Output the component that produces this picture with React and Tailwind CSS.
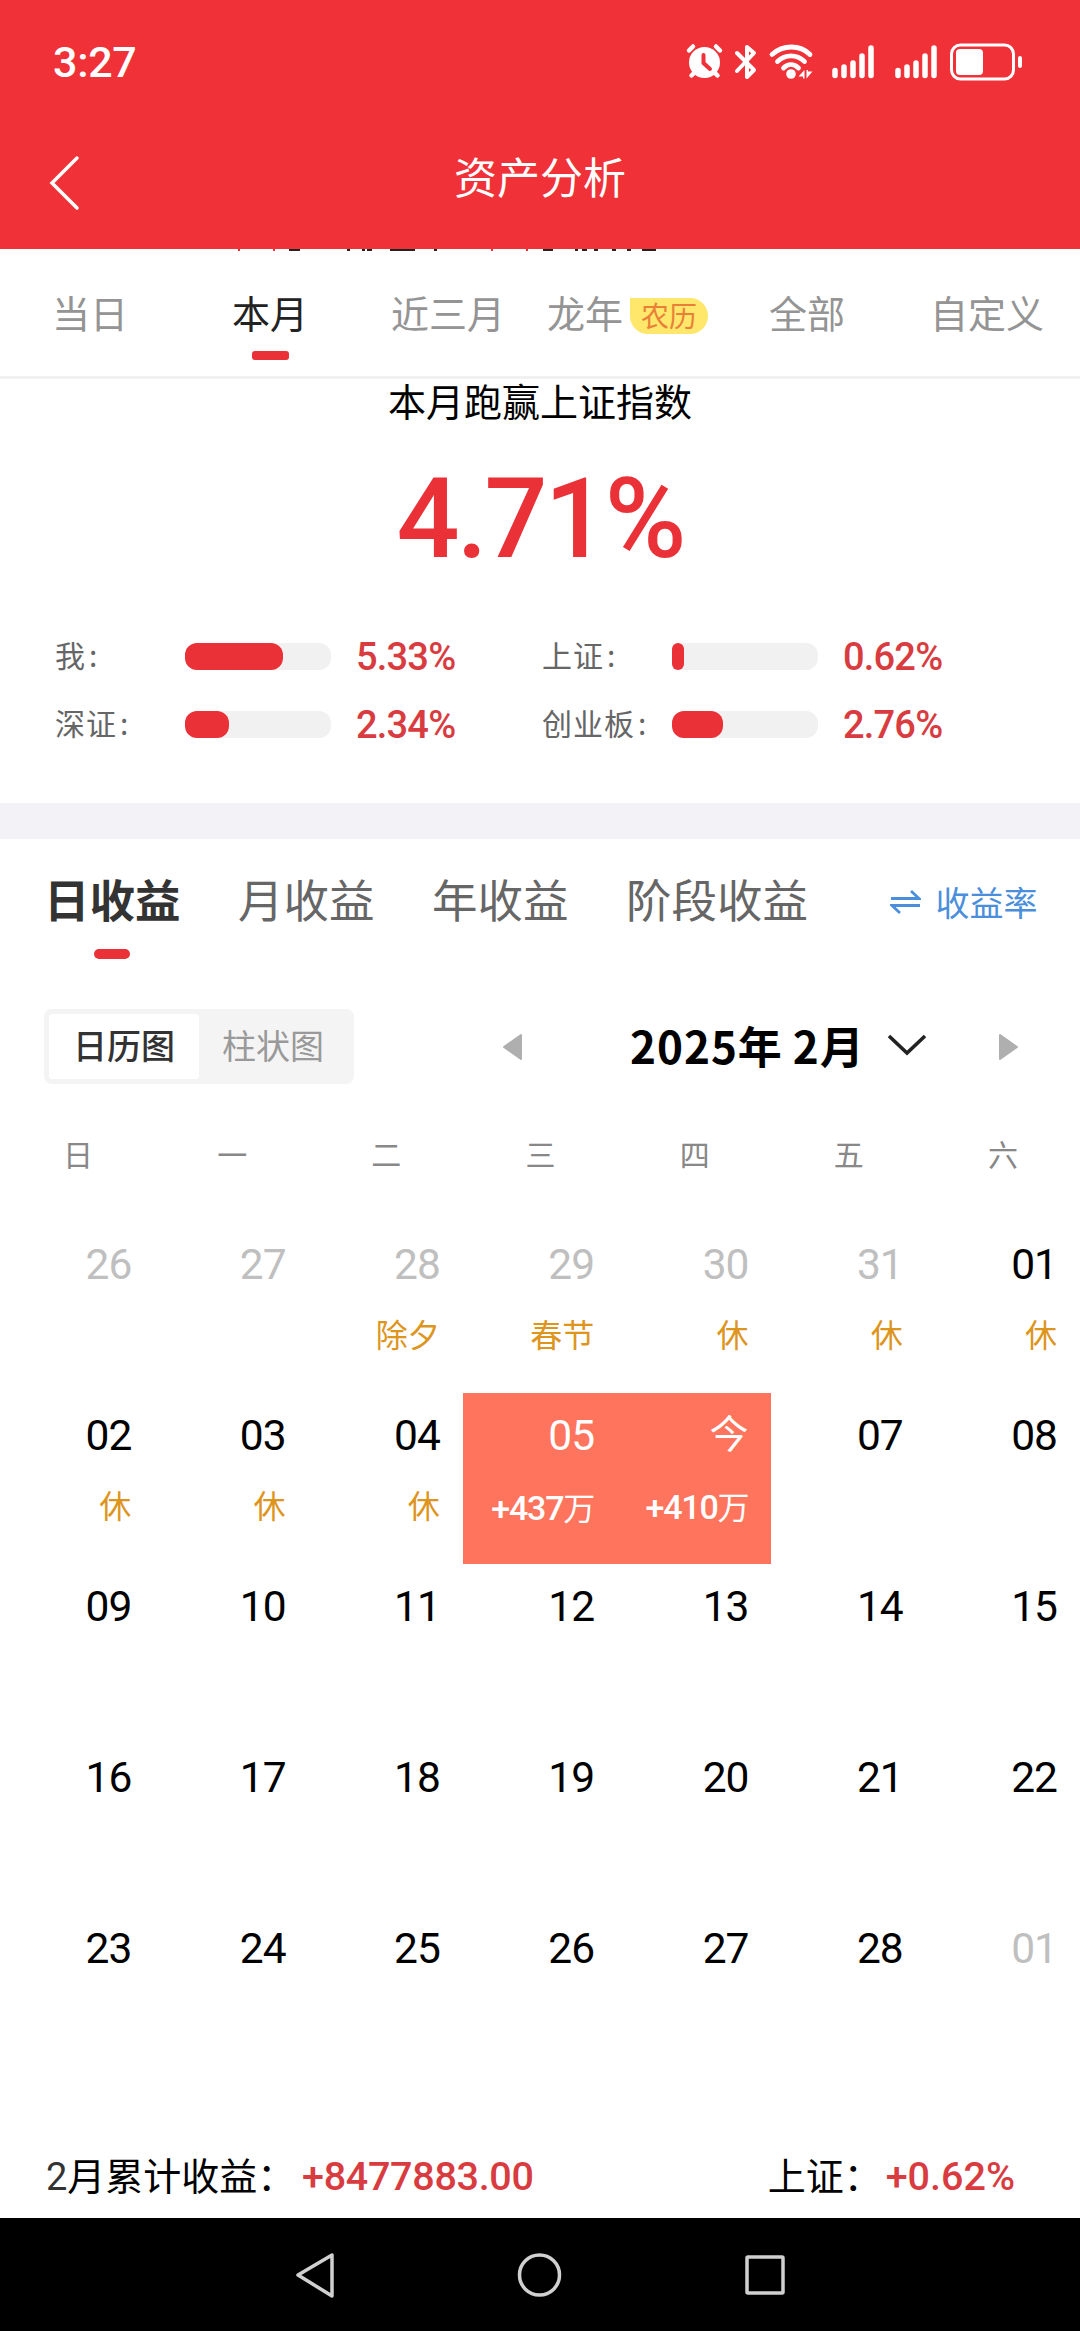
import React, { useState } from 'react';

const periods = [
  { id: 'day', label: '当日', width: 'w-[180px]' },
  { id: 'month', label: '本月', width: 'w-[159px]' },
  { id: 'quarter', label: '近三月', width: 'w-[156px]' },
  { id: 'lunar', label: '龙年', badge: '农历', width: 'w-[222px]' },
  { id: 'all', label: '全部', width: 'w-[161px]' },
  { id: 'custom', label: '自定义', width: 'w-[150px]' },
];

const indexes = [
  { label: '我', value: '5.33%', bar: 98 },
  { label: '上证', value: '0.62%', bar: 12 },
  { label: '深证', value: '2.34%', bar: 44 },
  { label: '创业板', value: '2.76%', bar: 51 },
];

const profitTabs = ['日收益', '月收益', '年收益', '阶段收益'];
const weekdays = ['日', '一', '二', '三', '四', '五', '六'];

// out = belongs to a neighbouring month
const days = [
  { d: '26', out: true }, { d: '27', out: true }, { d: '28', out: true, note: '除夕' }, { d: '29', out: true, note: '春节' },
  { d: '30', out: true, note: '休' }, { d: '31', out: true, note: '休' }, { d: '01', note: '休' },
  { d: '02', note: '休' }, { d: '03', note: '休' }, { d: '04', note: '休' }, { d: '05', profit: '+437' },
  { d: '今', profit: '+410' }, { d: '07' }, { d: '08' },
  { d: '09' }, { d: '10' }, { d: '11' }, { d: '12' }, { d: '13' }, { d: '14' }, { d: '15' },
  { d: '16' }, { d: '17' }, { d: '18' }, { d: '19' }, { d: '20' }, { d: '21' }, { d: '22' },
  { d: '23' }, { d: '24' }, { d: '25' }, { d: '26' }, { d: '27' }, { d: '28' }, { d: '01', out: true },
];

function StatusIcons() {
  return (
    <svg width="340" height="44" viewBox="685 40 340 44" fill="none">
      {/* Alarm */}
      <g stroke="#fff" strokeWidth="4.500" strokeLinecap="round">
        <path d="M689 50.500l4-4M720 50.500l-4-4M691.500 75.500l4-4M717.500 75.500l-4-4" />
      </g>
      <circle cx="704.500" cy="62.500" r="15.500" fill="#fff" />
      <path d="M703.500 55v8l6.500 6" stroke="#f03138" strokeWidth="4" strokeLinecap="round" />
      {/* Bluetooth */}
      <path d="M737 53l17 17-7 7V47l7 6-17 18" stroke="#fff" strokeWidth="4" strokeLinecap="round" strokeLinejoin="round" />
      {/* Wifi */}
      <g stroke="#fff" strokeWidth="4.800" strokeLinecap="round">
        <path d="M772 54.500c11-10 28-10 38 0M777.500 61.500c8-7.500 19-7.500 27 0M783.500 68c4.500-4.500 10.500-4.500 15 0" />
      </g>
      <circle cx="791" cy="74" r="4.800" fill="#fff" />
      <path d="M804.500 70v8.500h-1.500v-2h-4.500zM806.500 78.500v-8.500h1.500v1.500h4.500z" fill="#fff" />
      {/* Signal bars */}
      {[835, 898].map((x) => (
        <g key={x} stroke="#fff" strokeWidth="5.500" strokeLinecap="round">
          <path d={`M${x} 70.5v5M${x + 9} 67v8.5M${x + 18} 63v12.5M${x + 27} 56v19.5M${x + 36} 48v27.5`} />
        </g>
      ))}
      {/* Battery */}
      <rect x="951.500" y="45" width="62" height="34" rx="9" stroke="#fff" strokeWidth="3" />
      <rect x="956" y="49" width="27" height="26" rx="4" fill="#fff" />
      <rect x="1018" y="56" width="4" height="12" rx="2" fill="#fff" />
    </svg>
  );
}

function IndexRow({ label, value, bar }) {
  return (
    <div className="flex h-[68px] w-[487px] items-center">
      <span className="w-[130px] pb-[3px] text-[30px] tracking-[1px] text-[#666]">{label}<span className="ml-[3px]">:</span></span>
      <div className="h-[27px] w-[146px] rounded-[12px] bg-[#f1f1f1]">
        <div className="h-full rounded-[12px] bg-[#e93137]" style={{ width: bar }} />
      </div>
      <span className="ml-[25px] mt-[2px] font-[Roboto] text-[38px] font-medium tracking-[-0.800px] text-[#d93c40]">{value}</span>
    </div>
  );
}

function DayCell({ day }) {
  const color = day.profit ? 'bg-[#ff745d] text-white' : day.out ? 'text-[#bfbfbf]' : 'text-black';
  return (
    <div className={`flex h-[171px] flex-col items-end pr-[23px] ${color}`}>
      <span className={`h-12 leading-[48px] ${day.d === '今' ? 'mt-[18px] text-[39px]' : 'mt-[19px] text-[42.500px] tracking-[-1px]'}`}>{day.d}</span>
      {day.note && <span className="mt-[23px] text-[32px] leading-[48px] text-[#dd951e]">{day.note}</span>}
      {day.profit && (
        <span className="mt-[24px] whitespace-nowrap text-[34px] font-medium leading-[48px] tracking-[-1.200px]">{day.profit}<span className="text-[32px] font-normal">万</span></span>
      )}
    </div>
  );
}

export default function App() {
  const [period, setPeriod] = useState('month');
  const [tab, setTab] = useState('日收益');

  return (
    <div className="flex h-[2331px] w-[1080px] flex-col overflow-hidden bg-white font-['Noto_Sans_CJK_SC',sans-serif]">
      {/* Status bar and title */}
      <header className="h-[249px] shrink-0 bg-[#f03138] text-white">
        <div className="flex h-[124px] items-center justify-between pl-[53px] pr-[55px]">
          <span className="font-[Roboto] text-[43px] font-medium tracking-[-0.300px]">3:27</span>
          <StatusIcons />
        </div>
        <div className="flex h-[110px] items-center">
          <svg className="ml-[48px] mt-[8px]" width="34" height="56" viewBox="0 0 34 56" fill="none">
            <path d="M29 3L4 28l25 25" stroke="#fff" strokeWidth="3.500" strokeLinecap="round" />
          </svg>
          <h1 className="flex-1 pb-[7px] pr-[82px] text-center text-[43px] font-normal">资产分析</h1>
        </div>
      </header>

      {/* Period tabs */}
      <nav className="relative flex h-[130px] shrink-0 border-b-[3px] border-[#f1f1f1] pl-[52px] text-[38px]">
        {/* Edge of the content scrolled under the header */}
        <svg className="absolute left-0 top-0" width="1080" height="3" viewBox="0 0 1080 3">
          <path d="M239 0v2M274 0v2M492 0v2M527 0v2" stroke="#e93137" strokeWidth="2" />
          <path d="M289 1h11M347 1h3M362 1h3M367 1h5M390 1h25M434 1h3M543 1h10M575 1h3M582 1h5M594 1h4M612 1h4M627 1h4M642 1h14" stroke="#222" strokeWidth="2" />
        </svg>
        {periods.map((p) => (
          <button
            key={p.id}
            onClick={() => setPeriod(p.id)}
            className={`flex h-full shrink-0 flex-col items-start whitespace-nowrap pt-[35px] ${p.width} ${period === p.id ? 'text-[#222]' : 'text-[#949494]'}`}
          >
            <span className="flex items-center gap-[7px] leading-[56px]">
              {p.label}
              {p.badge && (
                <span className="mt-[7px] h-9 w-[78px] rounded-[18px] rounded-tl-none bg-[#ffe76b] text-center text-[28px] leading-[34px] text-[#ea8038]">{p.badge}</span>
              )}
            </span>
            {period === p.id && <span className="ml-[20px] mt-[11px] h-[9px] w-[37px] rounded-[3px] bg-[#e93137]" />}
          </button>
        ))}
      </nav>

      {/* Index comparison */}
      <section className="h-[424px] shrink-0">
        <p className="-mt-[2px] text-center text-[38px] leading-[46px]">本月跑赢上证指数</p>
        <p className="mt-[26px] text-center font-[Roboto] text-[111px] font-medium leading-[140px] tracking-[-3px] text-[#e93137]">4.71%</p>
        <div className="mt-[33px] flex flex-wrap pl-[55px]">
          {indexes.map((row) => <IndexRow key={row.label} {...row} />)}
        </div>
      </section>
      <div className="h-9 shrink-0 bg-[#f2f2f7]" />

      {/* Profit tabs */}
      <div className="flex h-[170px] shrink-0 pl-[44px] pt-[26px]">
        {profitTabs.map((t) => (
          <button
            key={t}
            onClick={() => setTab(t)}
            className={`mr-[57.500px] flex flex-col items-center text-[45.500px] leading-[66px] ${tab === t ? 'font-bold text-[#333]' : 'text-[#666]'}`}
          >
            {t}
            {tab === t && <span className="mt-[18px] h-[10px] w-9 rounded-full bg-[#e93137]" />}
          </button>
        ))}
        <button className="ml-[24px] mt-[3px] flex h-[66px] items-center gap-[15px] whitespace-nowrap text-[34px] text-[#4b8fdc]">
          <svg className="mt-[2px]" width="31" height="26" viewBox="0 0 31 26" fill="none" stroke="currentColor" strokeWidth="2.800">
            <path d="M1 9.500h28L21 2M30 16.500H2l8 7.500" />
          </svg>
          收益率
        </button>
      </div>

      {/* Chart switch and month picker */}
      <div className="flex h-[75px] shrink-0 items-center pl-[44px]">
        <div className="flex h-[75px] w-[310px] rounded-lg bg-[#f4f4f4] p-[5px] text-[34px] leading-[62px]">
          <span className="h-[65px] w-[150px] rounded bg-white text-center font-medium text-[#333]">日历图</span>
          <span className="w-[148px] text-center text-[#999]">柱状图</span>
        </div>
        <svg className="ml-[148px]" width="21" height="28" viewBox="0 0 21 28"><path d="M2 14L19 2v24z" fill="#afafaf" stroke="#afafaf" strokeWidth="2" strokeLinejoin="round" /></svg>
        <span className="ml-[107px] w-[230px] whitespace-nowrap pb-[4px] text-[44px] font-bold leading-[60px] tracking-[1px] text-black [word-spacing:-1px]">2025年 2月</span>
        <svg className="ml-[27px] mt-[-4px]" width="40" height="24" viewBox="0 0 40 24" fill="none"><path d="M2 3l18 17L38 3" stroke="#222" strokeWidth="3.600" /></svg>
        <svg className="ml-[71px]" width="21" height="28" viewBox="0 0 21 28"><path d="M19 14L2 2v24z" fill="#afafaf" stroke="#afafaf" strokeWidth="2" strokeLinejoin="round" /></svg>
      </div>

      {/* Calendar */}
      <div className="grid h-[138px] shrink-0 grid-cols-7 pl-[1px] text-center text-[30px] leading-[139px] text-[#888]">
        {weekdays.map((w) => <span key={w}>{w}</span>)}
      </div>
      <div className="grid shrink-0 grid-cols-7 font-[Roboto,'Noto_Sans_CJK_SC',sans-serif]">
        {days.map((day, i) => <DayCell key={i} day={day} />)}
      </div>

      {/* Month totals */}
      <footer className="flex flex-1 items-end justify-between pb-[12px] pl-[46px] pr-[65px] font-[Roboto,'Noto_Sans_CJK_SC',sans-serif] text-[38px] leading-[58px]">
        <div className="flex">
          <span className="w-[256px] whitespace-nowrap"><span className="text-[#333]">2</span>月累计收益：</span>
          <span className="text-[39.500px] font-medium tracking-[-0.300px] text-[#d93c40]">+8477883.00</span>
        </div>
        <div className="flex">
          <span className="w-[118px] whitespace-nowrap">上证：</span>
          <span className="text-[39.500px] font-medium text-[#d93c40]">+0.62%</span>
        </div>
      </footer>

      {/* System navigation */}
      <div className="flex h-[113px] shrink-0 items-center bg-black pl-[294px]">
        <svg width="494" height="50" viewBox="294 2250 494 50" fill="none" stroke="#d0d0d0" strokeWidth="3.500" strokeLinejoin="round">
          <path d="M298 2275l34-20v41z" />
          <circle cx="539.500" cy="2275" r="20" />
          <rect x="747" y="2257" width="36" height="36" rx="1" />
        </svg>
      </div>
    </div>
  );
}
